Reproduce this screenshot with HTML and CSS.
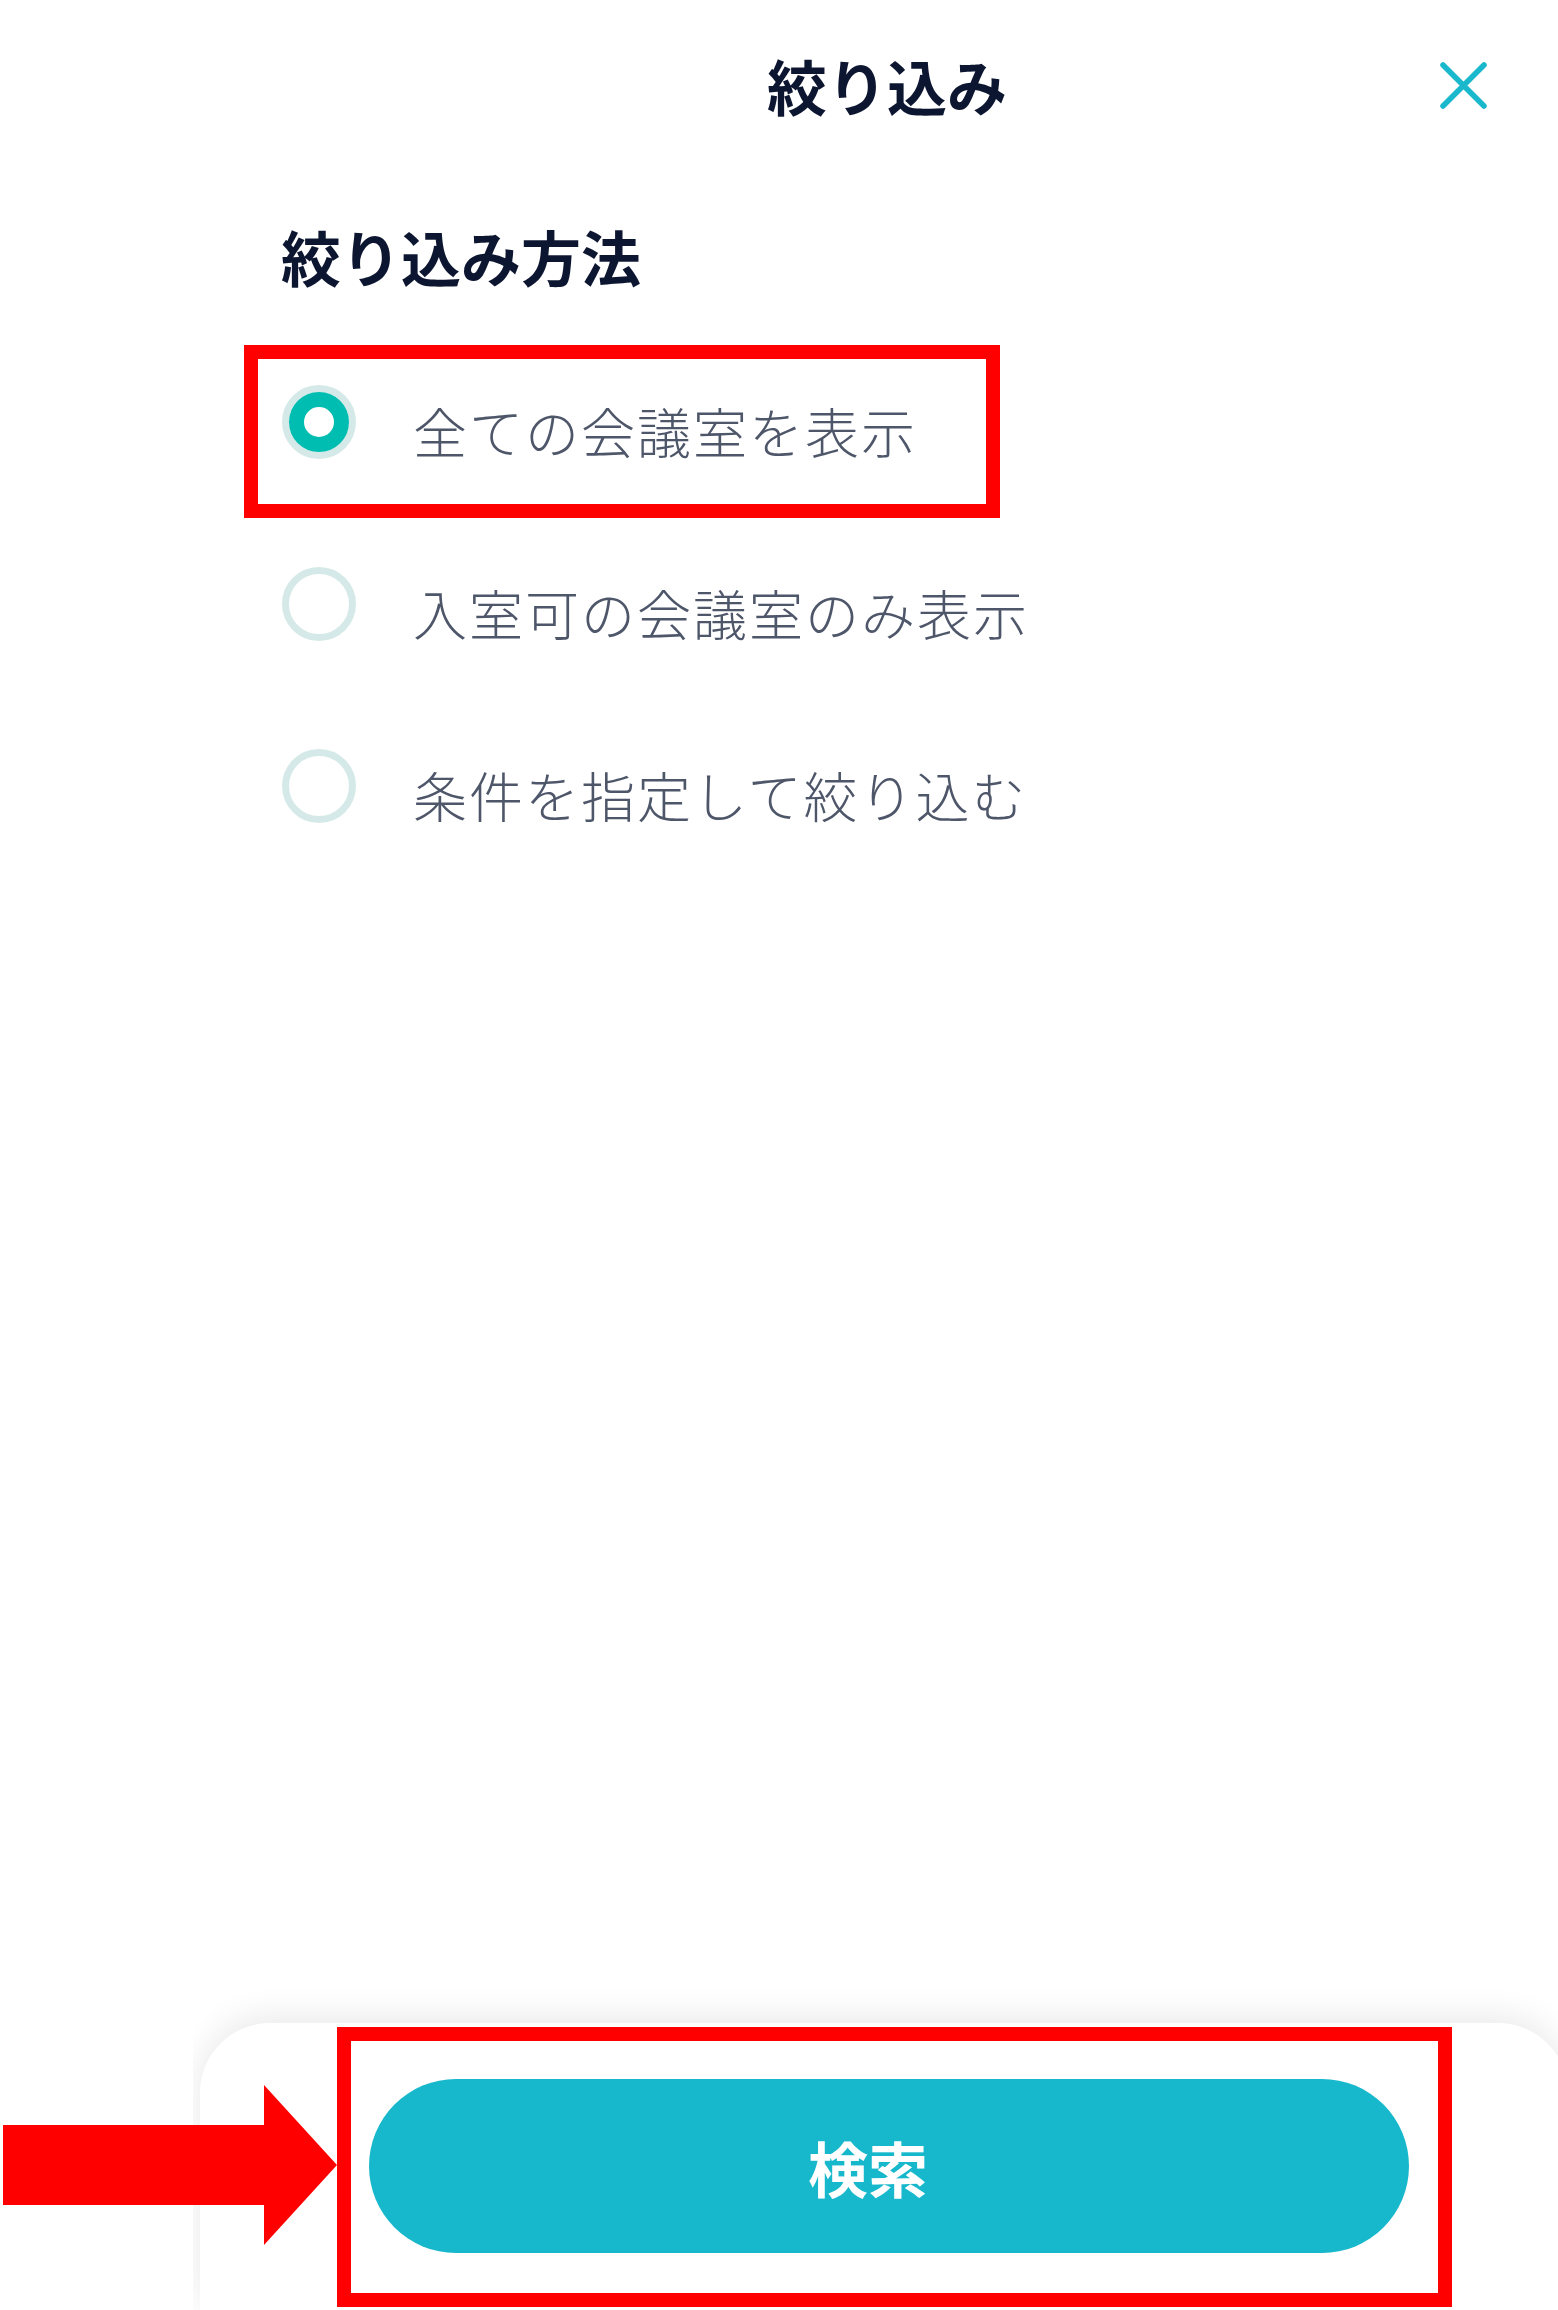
FILE: index.html
```html
<!DOCTYPE html>
<html lang="ja">
<head>
<meta charset="utf-8">
<title>絞り込み</title>
<link rel="stylesheet" href="styles.css">
</head>
<body>
<div class="page">
  <div class="modal">
    <header class="head">
      <span></span>
      <h1 class="title">絞り込み</h1>
      <button class="close" aria-label="閉じる">
        <svg width="49" height="47" viewBox="0 0 49 47"><path d="M4 3 L45 44 M45 3 L4 44" stroke="#1ab8cc" stroke-width="5.5" stroke-linecap="round" fill="none"/></svg>
      </button>
    </header>
    <section class="method">
      <h2 class="method-title">絞り込み方法</h2>
      <ul class="options">
        <li class="option"><span class="radio checked"></span><span class="label">全ての会議室を表示</span></li>
        <li class="option"><span class="radio"></span><span class="label">入室可の会議室のみ表示</span></li>
        <li class="option"><span class="radio"></span><span class="label">条件を指定して絞り込む</span></li>
      </ul>
    </section>
  </div>
  <div class="fill"></div>
  <footer class="foot-clip">
    <div class="panel">
      <button class="search">検索</button>
    </div>
  </footer>

  <div class="mark mark-option"></div>
  <div class="mark mark-button"></div>
  <svg class="arrow" width="340" height="160" viewBox="0 0 340 160"><polygon points="3,40 264,40 264,0 337,80 264,160 264,120 3,120" fill="#ff0000"/></svg>
</div>
</body>
</html>
```

FILE: styles.css
```css
* { box-sizing: border-box; }
html, body { margin: 0; padding: 0; }
body {
  width: 1558px;
  height: 2310px;
  overflow: hidden;
  background: #ffffff;
  font-family: "Noto Sans CJK JP", "Noto Sans", sans-serif;
}
.page {
  position: relative;
  width: 1558px;
  height: 2310px;
  display: flex;
  flex-direction: column;
}
.modal {
  margin-left: 216px;
  display: flex;
  flex-direction: column;
}
.head {
  display: grid;
  grid-template-columns: 1fr auto 1fr;
  align-items: center;
  padding: 55px 70px 0;
}
.title {
  margin: 0;
  font-size: 60px;
  line-height: 60px;
  font-weight: 700;
  color: #0d1630;
}
.close {
  justify-self: end;
  width: 49px;
  height: 47px;
  padding: 0;
  border: 0;
  background: none;
  display: flex;
}
.method {
  padding-left: 65px;
  margin-top: 111px;
}
.method-title {
  margin: 0;
  font-size: 60px;
  line-height: 60px;
  font-weight: 700;
  color: #0d1630;
}
.options {
  list-style: none;
  margin: 45px 0 0;
  padding: 0;
}
.option {
  height: 182px;
  display: flex;
  align-items: center;
  gap: 57px;
  padding-left: 1px;
}
.radio {
  position: relative;
  flex: none;
  width: 74px;
  height: 74px;
  border-radius: 50%;
  border: 7px solid #d5eae8;
  background: #ffffff;
}
.radio.checked::after {
  content: "";
  position: absolute;
  inset: 0;
  border-radius: 50%;
  border: 15px solid #00bdb1;
  background: #ffffff;
}
.label {
  padding-top: 18px;
  font-size: 54px;
  line-height: 54px;
  font-weight: 300;
  letter-spacing: 2px;
  color: #4e5669;
  white-space: nowrap;
}
.fill { flex: 1; }
.foot-clip {
  margin-left: 193px;
  height: 360px;
  padding-top: 73px;
  overflow: hidden;
}
.panel {
  margin-left: 7px;
  width: 1368px;
  height: 287px;
  border-radius: 70px 70px 0 0;
  background: #ffffff;
  box-shadow: 0 -6px 34px rgba(0, 0, 0, 0.09);
  padding-top: 56px;
  padding-left: 169px;
}
.search {
  display: flex;
  align-items: center;
  justify-content: center;
  width: 1040px;
  height: 174px;
  border: 0;
  border-radius: 87px;
  background: #17b8cc;
  color: #ffffff;
  font-family: "Noto Sans CJK JP", "Noto Sans", sans-serif;
  font-size: 60px;
  font-weight: 700;
  padding: 0 42px 0 0;
}
.mark {
  position: absolute;
  border: 14px solid #ff0000;
}
.mark-option {
  left: 244px;
  top: 345px;
  width: 756px;
  height: 173px;
}
.mark-button {
  left: 337px;
  top: 2027px;
  width: 1115px;
  height: 280px;
}
.arrow {
  position: absolute;
  left: 0;
  top: 2085px;
}
```
